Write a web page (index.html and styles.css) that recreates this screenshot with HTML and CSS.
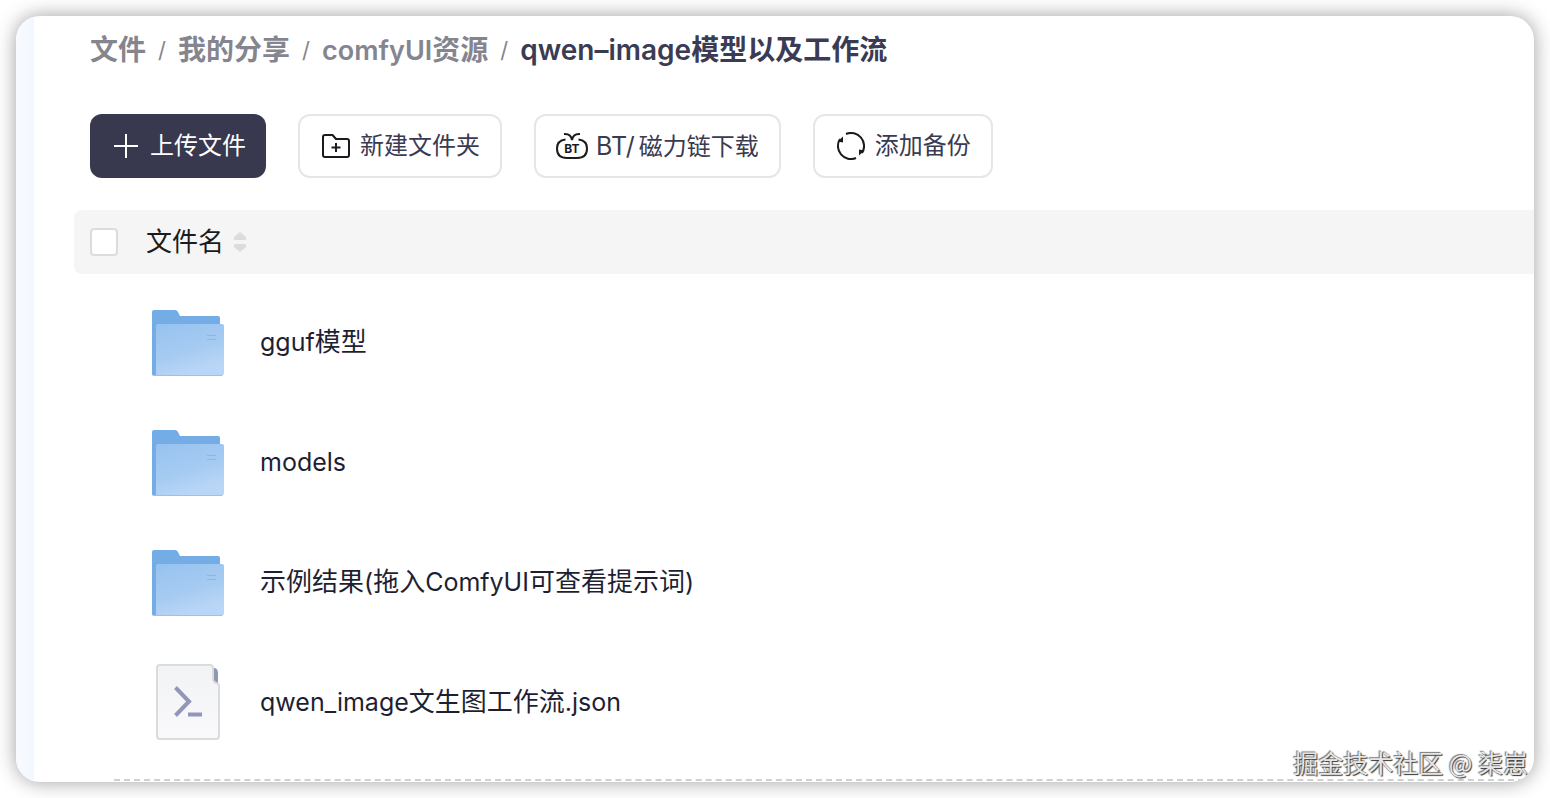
FILE: index.html
```html
<!DOCTYPE html>
<html lang="zh-CN">
<head>
<meta charset="utf-8">
<title>qwen-image模型以及工作流</title>
<link rel="stylesheet" href="styles.css">
</head>
<body>
<svg class="defs" width="0" height="0" aria-hidden="true">
  <defs>
    <linearGradient id="folder-front" x1="0" y1="0" x2="0.4" y2="1">
      <stop offset="0" stop-color="#97c2ef"/>
      <stop offset="0.6" stop-color="#a5cbf2"/>
      <stop offset="1" stop-color="#bad6f6"/>
    </linearGradient>
    <linearGradient id="sheet" x1="0" y1="0" x2="0" y2="1">
      <stop offset="0" stop-color="#f2f3f5"/>
      <stop offset="1" stop-color="#f9f9fb"/>
    </linearGradient>
    <symbol id="folder" viewBox="0 -2 72 68">
      <path d="M0 64V2Q0 0 2 0H23Q25 0 26 2L28 6H66Q68 6 68 8V40L6 66H2Q0 66 0 64Z" fill="#74ade5"/>
      <path d="M4 66V16Q4 14 6 14H70Q72 14 72 16V63Q72 66 69 66Z" fill="url(#folder-front)"/>
      <path d="M1 65.500H70" stroke="#a3bfe3"/>
      <path d="M55 25.500H64M55 29.500H64" stroke="#8ab6e8"/>
    </symbol>
  </defs>
</svg>
<div class="window">
  <aside class="rail"></aside>
  <main class="main">
    <nav class="crumbs" aria-label="路径">
      <a href="#">文件</a><span class="sep">/</span><a href="#">我的分享</a><span class="sep">/</span><a href="#"><span class="latin">comfyUI</span>资源</a><span class="sep">/</span><span class="current">qwen–image模型以及工作流</span>
    </nav>
    <div class="toolbar">
      <button class="btn primary" type="button">
        <svg width="28" height="28" viewBox="0 0 28 28" fill="none" stroke="#fff" stroke-width="2"><path d="M14 2V26M2 14H26"/></svg>
        <span>上传文件</span>
      </button>
      <button class="btn" type="button">
        <svg width="30" height="28" viewBox="-2 0 30 28" fill="none" stroke="#1b1b1f" stroke-width="2" stroke-linejoin="round"><path d="M1 5Q1 3 3 3H10.500L14 7H25Q27 7 27 9V23Q27 25 25 25H3Q1 25 1 23Z"/><path d="M14 11V20M9.500 15.500H18.500"/></svg>
        <span>新建文件夹</span>
      </button>
      <button class="btn bt" type="button">
        <svg width="32" height="28" viewBox="0 0 32 28" fill="none" stroke="#1b1b1f" stroke-width="2"><path d="M9.500 7.500Q1 8.500 1 16.500Q1 26 11 26H21Q31 26 31 16.500Q31 8.500 22.500 7.500"/><path d="M8 2Q15 1.500 16 8Q17 1.500 24 2"/><text class="bt-mark" x="16" y="21" text-anchor="middle">BT</text></svg>
        <span><span class="proto">BT/</span>磁力链下载</span>
      </button>
      <button class="btn" type="button">
        <svg width="30" height="28" viewBox="-2 0 30 28" fill="none" stroke="#1b1b1f" stroke-width="2"><path d="M9 2A13 13 0 0 1 25 21"/><path d="M19 26A13 13 0 0 1 3 7"/><path d="M0.500 9.500L6 4.500V10.500Z M27.500 18.500L22 23.500V17.500Z" fill="#1b1b1f" stroke="none"/></svg>
        <span>添加备份</span>
      </button>
    </div>
    <table class="files">
      <thead>
        <tr>
          <th class="pick"><input type="checkbox" aria-label="全选"></th>
          <th class="name">
            <span class="sort">文件名
              <svg width="12" height="20" viewBox="0 0 12 20" fill="#dcdcdc"><path d="M6 0L12 5V8H0V5Z"/><path d="M6 20L12 15V12H0V15Z"/></svg>
            </span>
          </th>
        </tr>
      </thead>
      <tbody>
        <tr><td></td><td><div class="file"><svg class="icon" width="72" height="68"><use href="#folder"/></svg><a href="#"><span class="latin">gguf</span>模型</a></div></td></tr>
        <tr><td></td><td><div class="file"><svg class="icon" width="72" height="68"><use href="#folder"/></svg><a href="#"><span class="latin">models</span></a></div></td></tr>
        <tr><td></td><td><div class="file"><svg class="icon" width="72" height="68"><use href="#folder"/></svg><a href="#">示例结果<span class="latin">(</span>拖入<span class="latin">ComfyUI</span>可查看提示词<span class="latin">)</span></a></div></td></tr>
        <tr><td></td><td><div class="file">
          <svg class="icon" width="72" height="76" viewBox="0 0 72 76" fill="none"><path d="M59 4H63Q66 5 66 9V19H59Z" fill="#8f98b3"/><path d="M8 1H58Q61 1 61 4V15Q61 18 64 19Q67 19 67 22V72Q67 75 64 75H8Q5 75 5 72V4Q5 1 8 1Z" fill="url(#sheet)" stroke="#dadbdf" stroke-width="2"/><path d="M23.500 23.500L37 37.500L23.500 51.500" stroke="#9297ba" stroke-width="4"/><path d="M36 50.500H50" stroke="#9297ba" stroke-width="4"/></svg>
          <a href="#"><span class="latin">qwen_image</span>文生图工作流<span class="latin">.json</span></a></div></td></tr>
      </tbody>
    </table>
    <div class="drop"></div>
  </main>
  <div class="watermark">掘金技术社区 @ 柒崽</div>
</div>
</body>
</html>
```
FILE: styles.css
```css
* {
  box-sizing: border-box;
}

body {
  margin: 0;
  padding: 16px;
  height: 100vh;
  background: #fff;
  color: #1f1f33;
  font-family: Inter, "Noto Sans CJK SC", sans-serif;
  font-size: 26px;
  line-height: 32px;
  overflow: hidden;
}

a {
  color: inherit;
  text-decoration: none;
}

.defs {
  position: absolute;
}

.window {
  position: relative;
  display: flex;
  height: 100%;
  border-radius: 24px;
  overflow: hidden;
  background: #fff;
  box-shadow: 0 0 20px rgba(0, 0, 0, 0.38);
}

.rail {
  flex: none;
  width: 18px;
  background: linear-gradient(90deg, #f8fbff, #f2f8ff);
}

.main {
  flex: 1;
  min-width: 0;
  padding-left: 40px;
}

.crumbs {
  display: flex;
  align-items: center;
  height: 68px;
  padding-left: 16px;
  color: #85858f;
  font-size: 28px;
  font-weight: 600;
  white-space: nowrap;
}

.crumbs .latin {
  font-size: 27px;
}

.sep {
  width: 32px;
  text-align: center;
  font-size: 22px;
  font-weight: 400;
}

.current {
  color: #3b3b53;
}

.toolbar {
  display: flex;
  gap: 32px;
  padding: 30px 16px 32px;
}

.btn {
  display: flex;
  align-items: center;
  gap: 10px;
  height: 64px;
  padding: 0 20px;
  border: 2px solid #e6e6e8;
  border-radius: 12px;
  background: #fff;
  color: #3a3a52;
  font: inherit;
  font-size: 24px;
  white-space: nowrap;
}

.btn.primary {
  padding: 0 20px 0 22px;
  border: 0;
  background: #38384f;
  color: #fff;
}

.btn.bt {
  gap: 8px;
}

.bt-mark {
  fill: #1b1b1f;
  stroke: none;
  font-size: 12px;
  font-weight: 700;
}

.proto {
  margin-right: 4px;
  font-size: 25px;
}

.files {
  width: 100%;
  border-collapse: separate;
  border-spacing: 0;
  table-layout: fixed;
}

.files .latin {
  font-size: 25px;
}

th {
  height: 64px;
  padding: 0;
  background: #f5f5f5;
  color: #1b1b1f;
  font-weight: 400;
  text-align: left;
}

.pick {
  width: 72px;
  padding-left: 16px;
  border-radius: 8px 0 0 8px;
}

.pick input {
  display: block;
  appearance: none;
  width: 28px;
  height: 28px;
  margin: 0;
  border: 2px solid #dcdcdc;
  border-radius: 4px;
  background: #fff;
}

.sort {
  display: flex;
  align-items: center;
  gap: 10px;
}

tbody::before {
  content: "";
  display: block;
  height: 8px;
}

td {
  height: 120px;
  padding: 0;
}

.file {
  display: flex;
  align-items: center;
  gap: 36px;
  padding-left: 6px;
  white-space: nowrap;
}

.icon {
  flex: none;
}

.drop {
  height: 40px;
  margin: 17px 0 0 40px;
  border-top: 2px dashed #d0d0d0;
}

.watermark {
  position: absolute;
  right: 6px;
  bottom: 4px;
  color: #e6e6e6;
  font-family: "Noto Sans CJK SC", sans-serif;
  font-size: 25px;
  text-shadow: 1px 1px 1px #333, -1px -1px 1px #777;
  white-space: nowrap;
}
```
